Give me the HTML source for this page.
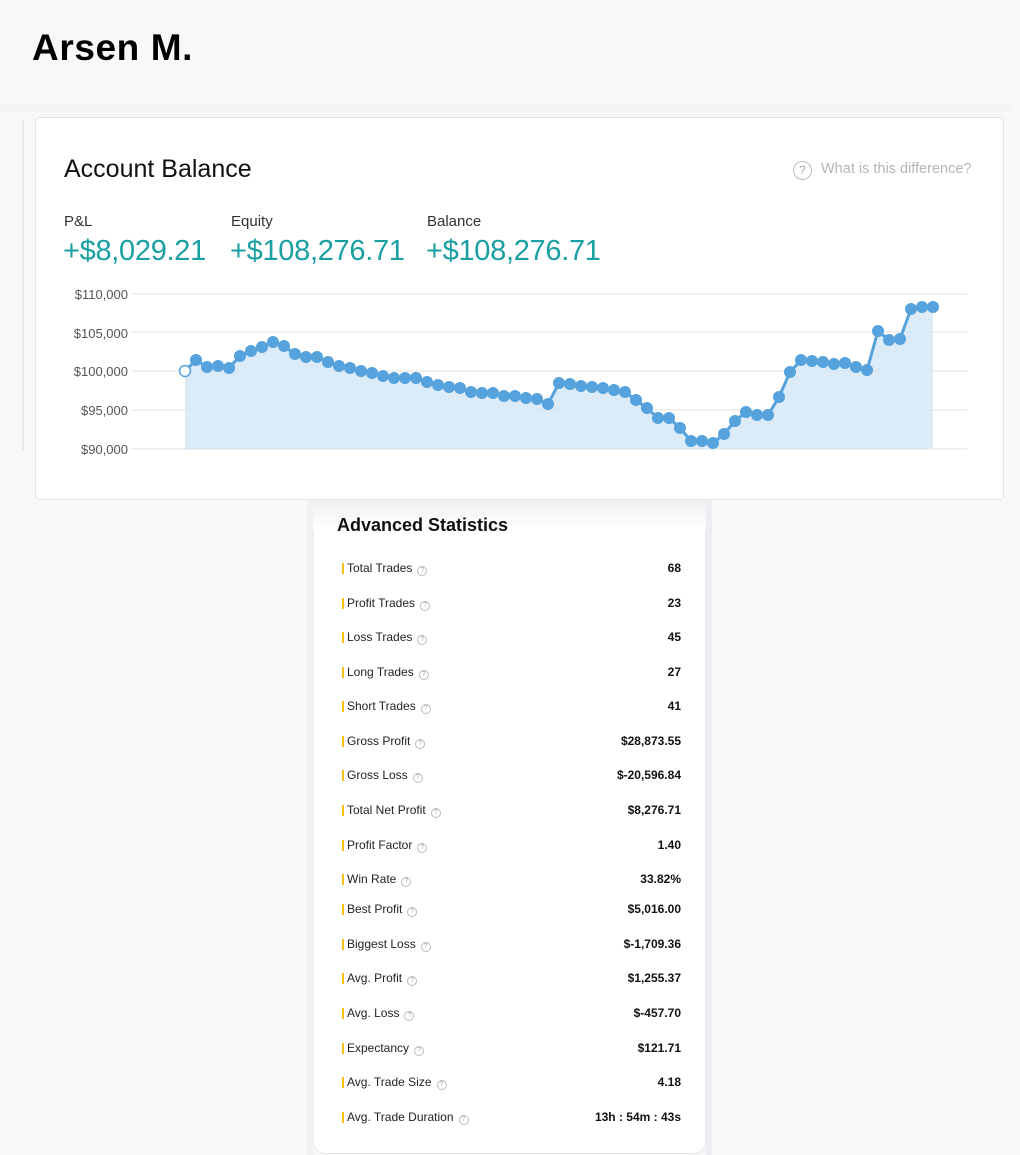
<!DOCTYPE html>
<html><head><meta charset="utf-8">
<style>
*{margin:0;padding:0;box-sizing:border-box}
body{width:1020px;height:1155px;background:#f8f8f8;font-family:"Liberation Sans",sans-serif;position:relative;overflow:hidden;color:#111}
.abs{position:absolute}
h1{position:absolute;left:32px;top:27px;font-size:37px;font-weight:bold;letter-spacing:0.6px;color:#000}
.band{left:0;top:104px;width:1012px;height:8px;background:#f3f4f5}
.lline{left:22px;top:120px;width:2px;height:330px;background:#e9eaec}
.card{left:35px;top:117px;width:969px;height:383px;background:#fff;border:1px solid #e2e3e6;border-radius:5px}
.lbl{font-size:15px;color:#333}
.big{font-size:29px;color:#1a9fa3;letter-spacing:-0.3px}
.stats{left:313px;top:500px;width:393px;height:654px;background:#fff;border-radius:0 0 12px 12px;border-left:1px solid #e9eaee;border-right:1px solid #e9eaee;border-bottom:1px solid #e4e5e8}
.sideL{left:307px;top:500px;width:6px;height:655px;background:#f0f1f3}
.sideR{left:706px;top:500px;width:6px;height:655px;background:#eceef1}
.row{position:absolute;left:342px;width:339px;height:14px;font-size:12px;line-height:14px;color:#222}
.row .b{position:absolute;left:0;top:2px;width:2px;height:11px;background:#f3c316}
.row .t{position:absolute;left:5px;top:0}
.row .q{display:inline-block;width:10px;height:10px;border:1px solid #bbb;border-radius:50%;font-size:7px;line-height:8px;text-align:center;color:#aaa;margin-left:5px;vertical-align:-1px;position:relative;top:-1px}
.row .v{position:absolute;right:0;top:0;font-weight:bold;color:#111}
</style></head><body>
<h1>Arsen M.</h1>
<div class="abs band"></div>
<div class="abs lline"></div>
<div class="abs sideL"></div><div class="abs sideR"></div>
<div class="abs stats"></div>
<div class="abs" style="left:313px;top:500px;width:393px;height:30px;background:linear-gradient(#eef0f2,#fff)"></div>
<div class="abs card"></div>
<div class="abs" style="left:64px;top:155px;font-size:25px;color:#111">Account Balance</div>
<div class="abs" style="left:793px;top:161px;width:19px;height:19px;border:1.5px solid #bbb;border-radius:50%;font-size:12px;line-height:16px;text-align:center;color:#aaa">?</div>
<div class="abs" style="left:821px;top:161px;font-size:14.5px;color:#b5b5b5">What is this difference?</div>
<div class="abs lbl" style="left:64px;top:213px">P&amp;L</div>
<div class="abs lbl" style="left:231px;top:213px">Equity</div>
<div class="abs lbl" style="left:427px;top:213px">Balance</div>
<div class="abs big" style="left:63px;top:235px">+$8,029.21</div>
<div class="abs big" style="left:230px;top:235px">+$108,276.71</div>
<div class="abs big" style="left:426px;top:235px">+$108,276.71</div>
<svg class="abs" style="left:0;top:0" width="1020" height="500">
<g font-family="Liberation Sans" font-size="13" fill="#555" text-anchor="end">
<text x="128" y="299">$110,000</text><text x="128" y="338">$105,000</text><text x="128" y="376">$100,000</text><text x="128" y="415">$95,000</text><text x="128" y="454">$90,000</text></g>
<g stroke="#e6e6e6" stroke-width="1.3">
<line x1="131" y1="294" x2="967" y2="294"/><line x1="131" y1="332" x2="967" y2="332"/><line x1="131" y1="371" x2="967" y2="371"/><line x1="131" y1="410" x2="967" y2="410"/><line x1="131" y1="449" x2="967" y2="449"/></g>
<polygon fill="#cfe5f5" fill-opacity="0.75" points="185,449 185,371 196,360 207,367 218,366 229,368 240,356 251,351 262,347 273,342 284,346 295,354 306,357 317,357 328,362 339,366 350,368 361,371 372,373 383,376 394,378 405,378 416,378 427,382 438,385 449,387 460,388 471,392 482,393 493,393 504,396 515,396 526,398 537,399 548,404 559,383 570,384 581,386 592,387 603,388 614,390 625,392 636,400 647,408 658,418 669,418 680,428 691,441 702,441 713,443 724,434 735,421 746,412 757,415 768,415 779,397 790,372 801,360 812,361 823,362 834,364 845,363 856,367 867,370 878,331 889,340 900,339 911,309 922,307 933,307 933,449"/>
<polyline fill="none" stroke="#55a2dc" stroke-width="3" points="185,371 196,360 207,367 218,366 229,368 240,356 251,351 262,347 273,342 284,346 295,354 306,357 317,357 328,362 339,366 350,368 361,371 372,373 383,376 394,378 405,378 416,378 427,382 438,385 449,387 460,388 471,392 482,393 493,393 504,396 515,396 526,398 537,399 548,404 559,383 570,384 581,386 592,387 603,388 614,390 625,392 636,400 647,408 658,418 669,418 680,428 691,441 702,441 713,443 724,434 735,421 746,412 757,415 768,415 779,397 790,372 801,360 812,361 823,362 834,364 845,363 856,367 867,370 878,331 889,340 900,339 911,309 922,307 933,307"/>
<circle cx="185" cy="371" r="5.5" fill="#fff" stroke="#55a2dc" stroke-width="1.5"/>
<g fill="#55a2dc">
<circle cx="196" cy="360" r="6"/><circle cx="207" cy="367" r="6"/><circle cx="218" cy="366" r="6"/><circle cx="229" cy="368" r="6"/><circle cx="240" cy="356" r="6"/><circle cx="251" cy="351" r="6"/><circle cx="262" cy="347" r="6"/><circle cx="273" cy="342" r="6"/><circle cx="284" cy="346" r="6"/><circle cx="295" cy="354" r="6"/><circle cx="306" cy="357" r="6"/><circle cx="317" cy="357" r="6"/><circle cx="328" cy="362" r="6"/><circle cx="339" cy="366" r="6"/><circle cx="350" cy="368" r="6"/><circle cx="361" cy="371" r="6"/><circle cx="372" cy="373" r="6"/><circle cx="383" cy="376" r="6"/><circle cx="394" cy="378" r="6"/><circle cx="405" cy="378" r="6"/><circle cx="416" cy="378" r="6"/><circle cx="427" cy="382" r="6"/><circle cx="438" cy="385" r="6"/><circle cx="449" cy="387" r="6"/><circle cx="460" cy="388" r="6"/><circle cx="471" cy="392" r="6"/><circle cx="482" cy="393" r="6"/><circle cx="493" cy="393" r="6"/><circle cx="504" cy="396" r="6"/><circle cx="515" cy="396" r="6"/><circle cx="526" cy="398" r="6"/><circle cx="537" cy="399" r="6"/><circle cx="548" cy="404" r="6"/><circle cx="559" cy="383" r="6"/><circle cx="570" cy="384" r="6"/><circle cx="581" cy="386" r="6"/><circle cx="592" cy="387" r="6"/><circle cx="603" cy="388" r="6"/><circle cx="614" cy="390" r="6"/><circle cx="625" cy="392" r="6"/><circle cx="636" cy="400" r="6"/><circle cx="647" cy="408" r="6"/><circle cx="658" cy="418" r="6"/><circle cx="669" cy="418" r="6"/><circle cx="680" cy="428" r="6"/><circle cx="691" cy="441" r="6"/><circle cx="702" cy="441" r="6"/><circle cx="713" cy="443" r="6"/><circle cx="724" cy="434" r="6"/><circle cx="735" cy="421" r="6"/><circle cx="746" cy="412" r="6"/><circle cx="757" cy="415" r="6"/><circle cx="768" cy="415" r="6"/><circle cx="779" cy="397" r="6"/><circle cx="790" cy="372" r="6"/><circle cx="801" cy="360" r="6"/><circle cx="812" cy="361" r="6"/><circle cx="823" cy="362" r="6"/><circle cx="834" cy="364" r="6"/><circle cx="845" cy="363" r="6"/><circle cx="856" cy="367" r="6"/><circle cx="867" cy="370" r="6"/><circle cx="878" cy="331" r="6"/><circle cx="889" cy="340" r="6"/><circle cx="900" cy="339" r="6"/><circle cx="911" cy="309" r="6"/><circle cx="922" cy="307" r="6"/><circle cx="933" cy="307" r="6"/>
</g></svg>
<div class="abs" style="left:337px;top:515px;font-size:18px;font-weight:bold;color:#111">Advanced Statistics</div>
<div class="row" style="top:561px"><span class="b"></span><span class="t">Total Trades<span class="q">?</span></span><span class="v">68</span></div>
<div class="row" style="top:596px"><span class="b"></span><span class="t">Profit Trades<span class="q">?</span></span><span class="v">23</span></div>
<div class="row" style="top:630px"><span class="b"></span><span class="t">Loss Trades<span class="q">?</span></span><span class="v">45</span></div>
<div class="row" style="top:665px"><span class="b"></span><span class="t">Long Trades<span class="q">?</span></span><span class="v">27</span></div>
<div class="row" style="top:699px"><span class="b"></span><span class="t">Short Trades<span class="q">?</span></span><span class="v">41</span></div>
<div class="row" style="top:734px"><span class="b"></span><span class="t">Gross Profit<span class="q">?</span></span><span class="v">$28,873.55</span></div>
<div class="row" style="top:768px"><span class="b"></span><span class="t">Gross Loss<span class="q">?</span></span><span class="v">$-20,596.84</span></div>
<div class="row" style="top:803px"><span class="b"></span><span class="t">Total Net Profit<span class="q">?</span></span><span class="v">$8,276.71</span></div>
<div class="row" style="top:838px"><span class="b"></span><span class="t">Profit Factor<span class="q">?</span></span><span class="v">1.40</span></div>
<div class="row" style="top:872px"><span class="b"></span><span class="t">Win Rate<span class="q">?</span></span><span class="v">33.82%</span></div>
<div class="row" style="top:902px"><span class="b"></span><span class="t">Best Profit<span class="q">?</span></span><span class="v">$5,016.00</span></div>
<div class="row" style="top:937px"><span class="b"></span><span class="t">Biggest Loss<span class="q">?</span></span><span class="v">$-1,709.36</span></div>
<div class="row" style="top:971px"><span class="b"></span><span class="t">Avg. Profit<span class="q">?</span></span><span class="v">$1,255.37</span></div>
<div class="row" style="top:1006px"><span class="b"></span><span class="t">Avg. Loss<span class="q">?</span></span><span class="v">$-457.70</span></div>
<div class="row" style="top:1041px"><span class="b"></span><span class="t">Expectancy<span class="q">?</span></span><span class="v">$121.71</span></div>
<div class="row" style="top:1075px"><span class="b"></span><span class="t">Avg. Trade Size<span class="q">?</span></span><span class="v">4.18</span></div>
<div class="row" style="top:1110px"><span class="b"></span><span class="t">Avg. Trade Duration<span class="q">?</span></span><span class="v">13h : 54m : 43s</span></div>
</body></html>
